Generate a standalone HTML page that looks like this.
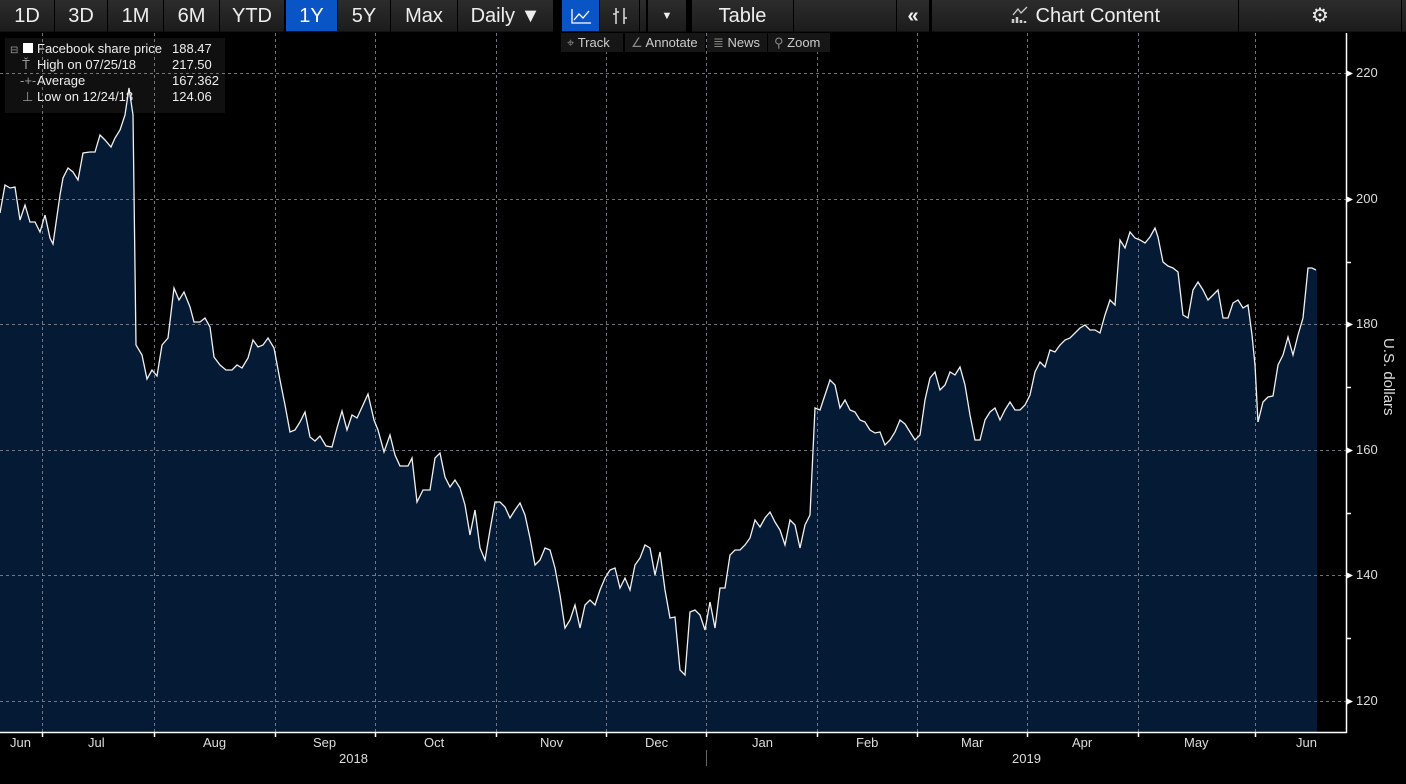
<!DOCTYPE html>
<html><head><meta charset="utf-8">
<style>
*{margin:0;padding:0;box-sizing:border-box}
body{width:1406px;height:784px;background:#000;overflow:hidden;position:relative;font-family:"Liberation Sans Narrow","Liberation Sans",sans-serif;color:#fff}
.btn{position:absolute;top:0;height:32px;background:linear-gradient(#2c2c2c,#1c1c1c);border-bottom:1px solid #111;color:#eee;font-size:20px;line-height:33px;text-align:center;font-stretch:condensed}
.act{background:#0a55c6;color:#fff}
.sub{position:absolute;top:33px;height:19px;background:#161616;font-size:13px;color:#ccc;line-height:19px;padding-left:6px}
.lg{position:absolute;left:5px;top:38px;width:220px;height:75px;background:rgba(20,20,20,0.8);font-size:13px;line-height:16px;color:#eee}
.lg div{position:absolute;white-space:nowrap}
.ax{position:absolute;font-size:13px;color:#ddd}
</style></head><body>
<div class="lg">
<div style="left:5px;top:5px;color:#999;font-size:10px">⊟</div>
<div style="left:18px;top:5px;width:10px;height:10px;background:#fff"></div>
<div style="left:32px;top:3px">Facebook share price</div><div style="left:167px;top:3px">188.47</div>
<div style="left:17px;top:19px;color:#999">Ť</div><div style="left:32px;top:19px">High on 07/25/18</div><div style="left:167px;top:19px">217.50</div>
<div style="left:15px;top:35px;color:#999">-+-</div><div style="left:32px;top:35px">Average</div><div style="left:167px;top:35px">167.362</div>
<div style="left:17px;top:51px;color:#999">⊥</div><div style="left:32px;top:51px">Low on 12/24/18</div><div style="left:167px;top:51px">124.06</div>
</div>
<svg width="1406" height="784" style="position:absolute;left:0;top:0">
<polygon fill="#041c3a" points="0,732 0,213 5,185 10,188 15,187 20,220 25,205 30,222 35,222 40,232 45,215 50,238 53,244 60,195 63,178 68,168 73,172 78,180 83,153 90,152 95,152 100,135 105,140 111,147 115,138 120,130 125,115 129,88 133,115 136,345 142,355 147,379 152,370 157,376 162,345 168,338 174,288 179,300 184,292 190,307 194,322 200,322 205,318 210,327 214,357 220,365 226,370 232,370 237,365 242,368 248,358 253,340 258,347 263,345 268,338 274,348 280,380 285,405 290,432 295,430 300,422 305,412 310,437 315,441 320,436 326,446 332,447 337,428 342,411 347,430 352,415 357,418 363,405 368,394 374,420 378,430 384,452 390,435 395,455 400,466 408,466 412,458 417,502 423,490 430,490 435,458 440,453 445,477 450,487 455,480 460,488 465,505 470,535 475,510 480,548 485,560 490,530 495,502 500,502 505,507 510,518 515,510 520,503 525,515 530,538 535,565 540,560 545,548 550,550 555,568 560,595 565,628 570,620 575,605 580,628 585,605 590,600 595,605 600,590 605,578 610,570 615,568 620,588 625,578 630,590 635,565 640,558 645,545 650,548 655,575 660,552 665,590 670,618 675,617 680,670 685,675 690,612 695,610 700,615 705,630 710,602 715,628 720,588 725,588 730,555 735,550 740,550 745,545 750,538 755,520 760,527 765,518 770,512 775,522 780,530 785,545 790,520 795,525 800,548 805,525 810,515 815,408 820,410 825,395 830,380 835,385 840,408 845,400 850,410 855,412 860,420 865,422 870,430 875,433 880,432 885,445 890,440 895,432 900,420 905,424 910,432 915,440 920,435 925,400 930,378 935,372 940,390 945,385 950,372 955,375 960,367 965,385 970,415 975,440 980,440 985,420 990,412 995,408 1000,420 1005,410 1010,402 1015,410 1020,410 1025,405 1030,395 1035,372 1040,362 1045,367 1050,350 1055,352 1060,345 1065,340 1070,338 1075,333 1080,328 1085,325 1090,330 1095,330 1100,333 1105,315 1110,300 1115,305 1120,240 1125,248 1130,232 1135,238 1140,240 1145,243 1150,237 1155,228 1158,237 1163,262 1168,266 1173,268 1178,272 1183,315 1188,318 1193,290 1198,282 1203,290 1208,300 1213,295 1218,290 1223,318 1228,318 1233,303 1238,300 1243,308 1248,305 1252,335 1255,365 1258,422 1263,402 1268,397 1273,396 1278,365 1283,355 1288,337 1293,355 1298,335 1303,318 1308,268 1312,268 1316,270 1317,270 1317,732" fill-opacity="0.92"/>
<g stroke="#8a8f99" stroke-width="1" stroke-dasharray="3,3" opacity="0.8">
<line x1="0" y1="73.5" x2="1346" y2="73.5"/><line x1="0" y1="199.5" x2="1346" y2="199.5"/><line x1="0" y1="324.5" x2="1346" y2="324.5"/><line x1="0" y1="450.5" x2="1346" y2="450.5"/><line x1="0" y1="575.5" x2="1346" y2="575.5"/><line x1="0" y1="701.5" x2="1346" y2="701.5"/>
<line x1="42.5" y1="33" x2="42.5" y2="732"/><line x1="154.5" y1="33" x2="154.5" y2="732"/><line x1="275.5" y1="33" x2="275.5" y2="732"/><line x1="375.5" y1="33" x2="375.5" y2="732"/><line x1="496.5" y1="33" x2="496.5" y2="732"/><line x1="606.5" y1="33" x2="606.5" y2="732"/><line x1="706.5" y1="33" x2="706.5" y2="732"/><line x1="817.5" y1="33" x2="817.5" y2="732"/><line x1="917.5" y1="33" x2="917.5" y2="732"/><line x1="1027.5" y1="33" x2="1027.5" y2="732"/><line x1="1138.5" y1="33" x2="1138.5" y2="732"/><line x1="1255.5" y1="33" x2="1255.5" y2="732"/>
</g>
<polyline fill="none" stroke="#f0f0f0" stroke-width="1.3" points="0,213 5,185 10,188 15,187 20,220 25,205 30,222 35,222 40,232 45,215 50,238 53,244 60,195 63,178 68,168 73,172 78,180 83,153 90,152 95,152 100,135 105,140 111,147 115,138 120,130 125,115 129,88 133,115 136,345 142,355 147,379 152,370 157,376 162,345 168,338 174,288 179,300 184,292 190,307 194,322 200,322 205,318 210,327 214,357 220,365 226,370 232,370 237,365 242,368 248,358 253,340 258,347 263,345 268,338 274,348 280,380 285,405 290,432 295,430 300,422 305,412 310,437 315,441 320,436 326,446 332,447 337,428 342,411 347,430 352,415 357,418 363,405 368,394 374,420 378,430 384,452 390,435 395,455 400,466 408,466 412,458 417,502 423,490 430,490 435,458 440,453 445,477 450,487 455,480 460,488 465,505 470,535 475,510 480,548 485,560 490,530 495,502 500,502 505,507 510,518 515,510 520,503 525,515 530,538 535,565 540,560 545,548 550,550 555,568 560,595 565,628 570,620 575,605 580,628 585,605 590,600 595,605 600,590 605,578 610,570 615,568 620,588 625,578 630,590 635,565 640,558 645,545 650,548 655,575 660,552 665,590 670,618 675,617 680,670 685,675 690,612 695,610 700,615 705,630 710,602 715,628 720,588 725,588 730,555 735,550 740,550 745,545 750,538 755,520 760,527 765,518 770,512 775,522 780,530 785,545 790,520 795,525 800,548 805,525 810,515 815,408 820,410 825,395 830,380 835,385 840,408 845,400 850,410 855,412 860,420 865,422 870,430 875,433 880,432 885,445 890,440 895,432 900,420 905,424 910,432 915,440 920,435 925,400 930,378 935,372 940,390 945,385 950,372 955,375 960,367 965,385 970,415 975,440 980,440 985,420 990,412 995,408 1000,420 1005,410 1010,402 1015,410 1020,410 1025,405 1030,395 1035,372 1040,362 1045,367 1050,350 1055,352 1060,345 1065,340 1070,338 1075,333 1080,328 1085,325 1090,330 1095,330 1100,333 1105,315 1110,300 1115,305 1120,240 1125,248 1130,232 1135,238 1140,240 1145,243 1150,237 1155,228 1158,237 1163,262 1168,266 1173,268 1178,272 1183,315 1188,318 1193,290 1198,282 1203,290 1208,300 1213,295 1218,290 1223,318 1228,318 1233,303 1238,300 1243,308 1248,305 1252,335 1255,365 1258,422 1263,402 1268,397 1273,396 1278,365 1283,355 1288,337 1293,355 1298,335 1303,318 1308,268 1312,268 1316,270"/>
<g stroke="#fff" stroke-width="1.5">
<line x1="0" y1="732.5" x2="1347" y2="732.5"/><line x1="1346.5" y1="33" x2="1346.5" y2="733"/>
<line x1="42.5" y1="732" x2="42.5" y2="737"/><line x1="154.5" y1="732" x2="154.5" y2="737"/><line x1="275.5" y1="732" x2="275.5" y2="737"/><line x1="375.5" y1="732" x2="375.5" y2="737"/><line x1="496.5" y1="732" x2="496.5" y2="737"/><line x1="606.5" y1="732" x2="606.5" y2="737"/><line x1="706.5" y1="732" x2="706.5" y2="737"/><line x1="817.5" y1="732" x2="817.5" y2="737"/><line x1="917.5" y1="732" x2="917.5" y2="737"/><line x1="1027.5" y1="732" x2="1027.5" y2="737"/><line x1="1138.5" y1="732" x2="1138.5" y2="737"/><line x1="1255.5" y1="732" x2="1255.5" y2="737"/>
<line x1="1346" y1="262.5" x2="1351" y2="262.5"/><line x1="1346" y1="387.5" x2="1351" y2="387.5"/><line x1="1346" y1="513.5" x2="1351" y2="513.5"/><line x1="1346" y1="638.5" x2="1351" y2="638.5"/>
</g>
<g fill="#fff"><polygon points="1346,70 1353,73.5 1346,77"/><polygon points="1346,196 1353,199.5 1346,203"/><polygon points="1346,321 1353,324.5 1346,328"/><polygon points="1346,447 1353,450.5 1346,454"/><polygon points="1346,572 1353,575.5 1346,579"/><polygon points="1346,698 1353,701.5 1346,705"/></g>
<line x1="706.5" y1="750" x2="706.5" y2="766" stroke="#666"/>
</svg>
<div class="ax" style="left:1356px;top:65px">220</div>
<div class="ax" style="left:1356px;top:191px">200</div>
<div class="ax" style="left:1356px;top:316px">180</div>
<div class="ax" style="left:1356px;top:442px">160</div>
<div class="ax" style="left:1356px;top:567px">140</div>
<div class="ax" style="left:1356px;top:693px">120</div>
<div class="ax" style="left:1380px;top:338px;writing-mode:vertical-rl;font-size:15px">U.S. dollars</div>
<div class="ax" style="left:10px;top:735px">Jun</div>
<div class="ax" style="left:88px;top:735px">Jul</div>
<div class="ax" style="left:203px;top:735px">Aug</div>
<div class="ax" style="left:313px;top:735px">Sep</div>
<div class="ax" style="left:424px;top:735px">Oct</div>
<div class="ax" style="left:540px;top:735px">Nov</div>
<div class="ax" style="left:645px;top:735px">Dec</div>
<div class="ax" style="left:752px;top:735px">Jan</div>
<div class="ax" style="left:856px;top:735px">Feb</div>
<div class="ax" style="left:961px;top:735px">Mar</div>
<div class="ax" style="left:1072px;top:735px">Apr</div>
<div class="ax" style="left:1184px;top:735px">May</div>
<div class="ax" style="left:1296px;top:735px">Jun</div>
<div class="ax" style="left:339px;top:751px">2018</div>
<div class="ax" style="left:1012px;top:751px">2019</div>

<div class="btn" style="left:0;width:54px">1D</div>
<div class="btn" style="left:55px;width:52px">3D</div>
<div class="btn" style="left:108px;width:55px">1M</div>
<div class="btn" style="left:164px;width:55px">6M</div>
<div class="btn" style="left:220px;width:64px">YTD</div>
<div class="btn act" style="left:286px;width:51px">1Y</div>
<div class="btn" style="left:338px;width:52px">5Y</div>
<div class="btn" style="left:391px;width:66px">Max</div>
<div class="btn" style="left:458px;width:95px">Daily ▼</div>
<div class="btn act" style="left:562px;width:37px"><svg width="22" height="18" style="margin-top:7px"><path d="M2 2V16H21" stroke="#fff" fill="none" stroke-width="1.3"/><path d="M4 13L9 7L13 11L19 4" stroke="#fff" fill="none" stroke-width="1.3"/></svg></div>
<div class="btn" style="left:600px;width:39px"><svg width="22" height="20" style="margin-top:6px"><path d="M7 2V18M4 8H7M15 2V18M15 12H18M10 6H7" stroke="#ddd" fill="none" stroke-width="1.5"/></svg></div>
<div class="btn" style="left:640px;width:6px"></div>
<div class="btn" style="left:648px;width:38px;font-size:11px">▼</div>
<div class="btn" style="left:692px;width:101px">Table</div>
<div class="btn" style="left:794px;width:102px"></div>
<div class="btn" style="left:897px;width:32px;font-weight:bold">«</div>
<div class="btn" style="left:932px;width:306px"><svg width="20" height="18" style="vertical-align:-2px"><path d="M3 9L8 3L11 7L17 1" stroke="#ccc" fill="none" stroke-width="1.3"/><path d="M3 17V13M7 17V11M11 17V14M15 17V15" stroke="#ccc" stroke-width="2.5"/></svg> Chart Content</div>
<div class="btn" style="left:1239px;width:162px">⚙</div>
<div class="btn" style="left:1402px;width:4px"></div>

<div class="sub" style="left:561px;width:62px"><span style="color:#888">⌖</span> Track</div>
<div class="sub" style="left:625px;width:80px"><span style="color:#888">∠</span> Annotate</div>
<div class="sub" style="left:707px;width:60px"><span style="color:#888">≣</span> News</div>
<div class="sub" style="left:768px;width:62px"><span style="color:#888">⚲</span> Zoom</div>
</body></html>
